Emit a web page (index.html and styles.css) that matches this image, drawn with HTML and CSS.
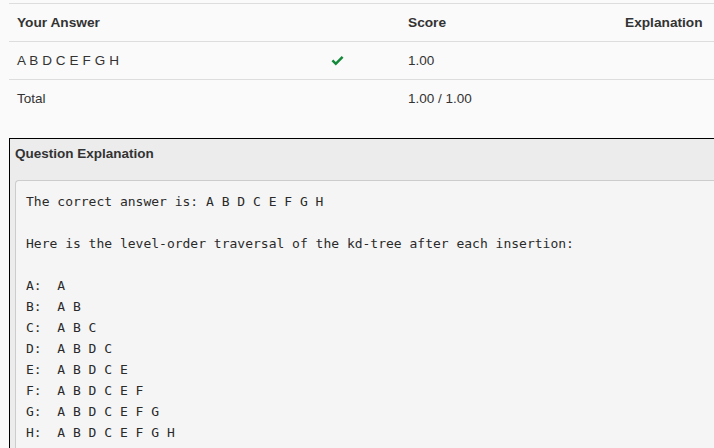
FILE: index.html
```html
<!DOCTYPE html>
<html>
<head>
<meta charset="utf-8">
<link rel="stylesheet" href="styles.css">
</head>
<body>
<div class="page">
  <table class="results">
    <colgroup>
      <col class="c1"><col class="c2"><col class="c3"><col class="c4">
    </colgroup>
    <thead>
      <tr><th>Your Answer</th><th></th><th>Score</th><th>Explanation</th></tr>
    </thead>
    <tbody>
      <tr>
        <td class="answer">A B D C E F G H</td>
        <td><svg class="check" width="13" height="10" viewBox="0 0 13 10"><path d="M0.5 5.2 L2.3 3.4 L4.8 5.9 L10.7 0 L12.5 1.8 L4.8 9.5 Z" fill="#15893a"/></svg></td>
        <td>1.00</td>
        <td></td>
      </tr>
      <tr class="total">
        <td>Total</td><td></td><td>1.00 / 1.00</td><td></td>
      </tr>
    </tbody>
  </table>

  <section class="panel">
    <div class="panel-heading">Question Explanation</div>
    <div class="panel-body">
<pre class="explain">The correct answer is: A B D C E F G H

Here is the level-order traversal of the kd-tree after each insertion:

A:  A
B:  A B
C:  A B C
D:  A B D C
E:  A B D C E
F:  A B D C E F
G:  A B D C E F G
H:  A B D C E F G H</pre>
    </div>
  </section>
</div>
</body>
</html>
```

FILE: styles.css
```css
html, body {
  margin: 0;
  padding: 0;
  background: #fafafa;
  overflow: hidden;
}
body {
  width: 714px;
  height: 448px;
  font-family: "Liberation Sans", Arial, sans-serif;
  color: #333;
}
.page {
  padding: 3px 0 0 9px;
  height: 445px;
  overflow: hidden;
}
.results {
  border-collapse: collapse;
  table-layout: fixed;
  width: 705px;
  font-size: 13.5px;
}
.c1 { width: 314px; }
.c2 { width: 77px; }
.c3 { width: 217px; }
.c4 { width: 97px; }
.results th,
.results td {
  text-align: left;
  padding: 8px 8px;
  line-height: 21px;
  border-top: 1px solid #dddddd;
  vertical-align: middle;
  white-space: nowrap;
}
.results th {
  font-weight: bold;
  font-size: 13.7px;
}
.answer {
  letter-spacing: 0.1px;
}
.check {
  display: block;
  margin-top: 1px;
}
.panel {
  margin-top: 21px;
  border-top: 1px solid #000;
  border-left: 1px solid #000;
  background: #ececec;
  height: 310px;
}
.panel-heading {
  padding: 5px 6px 0 5px;
  height: 36px;
  line-height: 20px;
  font-size: 13.5px;
  font-weight: bold;
}
.panel-body {
  padding: 0 0 0 5px;
}
.explain {
  margin: 0;
  padding: 10px 10px 10px;
  background: #f5f5f5;
  border: 1px solid #cccccc;
  border-right: none;
  border-radius: 4px 0 0 4px;
  font-family: "DejaVu Sans Mono", "Liberation Mono", monospace;
  font-size: 13px;
  line-height: 21px;
  color: #2a2a2a;
  height: 280px;
}
```
